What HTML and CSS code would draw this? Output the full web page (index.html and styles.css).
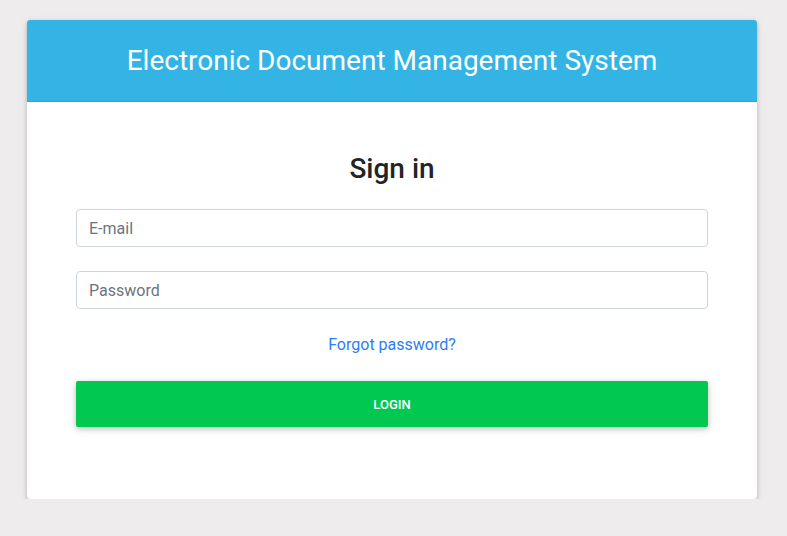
FILE: index.html
```html
<!DOCTYPE html>
<html>
<head>
<meta charset="utf-8">
<link rel="stylesheet" href="styles.css">
</head>
<body>
<div class="card">
  <div class="card-header">Electronic Document Management System</div>
  <div class="card-body">
    <h2 class="title">Sign in</h2>
    <form class="form">
      <input class="field" type="email" placeholder="E-mail">
      <input class="field" type="password" placeholder="Password">
      <a class="forgot" href="#">Forgot password?</a>
      <button class="btn" type="button">LOGIN</button>
    </form>
  </div>
</div>
</body>
</html>
```
FILE: styles.css
```css
html, body {
  margin: 0;
  padding: 0;
}
body {
  background: #eeeced;
  font-family: Roboto, "Noto Sans", sans-serif;
  padding: 20px 0 0 27px;
}
.card {
  width: 730px;
  background: #fff;
  border-radius: 3px;
  box-shadow: 0 2px 4px rgba(0,0,0,0.2), 0 2px 10px rgba(0,0,0,0.08);
  overflow: hidden;
}
.card-header {
  background: #33b4e5;
  color: #fff;
  height: 81px;
  border-bottom: 1px solid #2ba2d2;
  display: flex;
  align-items: center;
  justify-content: center;
  font-size: 28px;
  font-weight: 400;
}
.card-body {
  padding: 48px 49px 72px;
}
.title {
  margin: 0 0 22px;
  text-align: center;
  font-size: 28px;
  font-weight: 500;
  color: #212529;
  line-height: 37px;
}
.form {
  display: flex;
  flex-direction: column;
}
.field {
  height: 38px;
  box-sizing: border-box;
  border: 1px solid #ced4da;
  border-radius: 4px;
  padding: 0 12px;
  font-family: Roboto, sans-serif;
  font-size: 16px;
  color: #495057;
  margin-bottom: 24px;
  outline: none;
}
.field::placeholder {
  color: #6c757d;
}
.forgot {
  align-self: center;
  color: #2a7ef5;
  text-decoration: none;
  font-size: 16px;
  line-height: 24px;
  margin-bottom: 24px;
}
.btn {
  height: 46px;
  border: none;
  border-radius: 2px;
  background: #00c851;
  color: #fff;
  font-family: Roboto, sans-serif;
  font-size: 13px;
  font-weight: 500;
  box-shadow: 0 2px 5px rgba(0,0,0,0.16), 0 2px 10px rgba(0,0,0,0.12);
}
```
